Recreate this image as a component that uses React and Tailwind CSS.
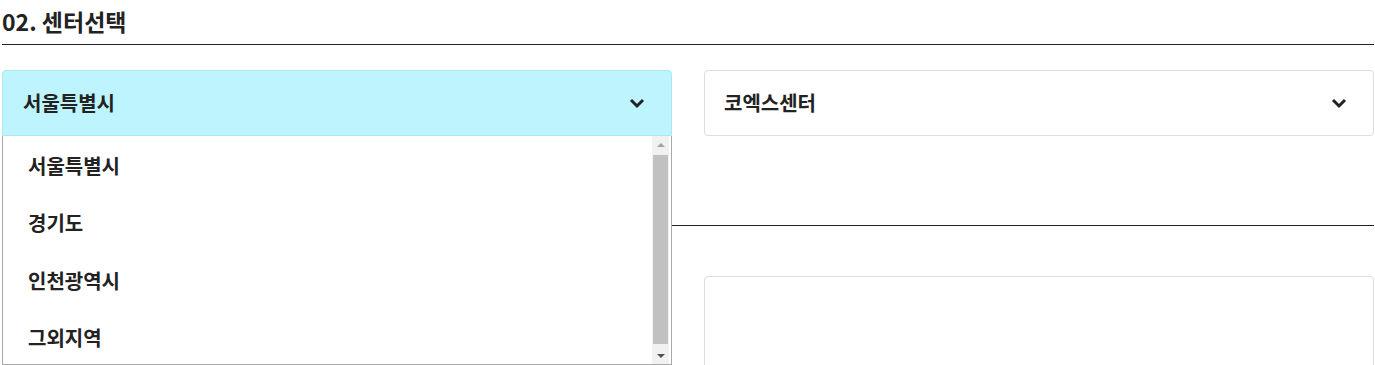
import React from 'react';

const regions = ['서울특별시', '경기도', '인천광역시', '그외지역'];

const Chevron = () => (
  <svg width="16" height="12" viewBox="0 0 16 12" fill="none">
    <path d="M2 3l6 6 6-6" stroke="#222" strokeWidth="3" />
  </svg>
);

const App = () => {
  return (
    <div className="w-[1375px] h-[365px] overflow-hidden bg-white pl-[2px] pr-[1px] text-[#222]" style={{ fontFamily: '"Noto Sans CJK KR", "Noto Sans", sans-serif' }}>
      {/* Section 02 */}
      <h2 className="h-[44px] pt-[5px] text-[23px] font-bold leading-[32px]">02. 센터선택</h2>
      <div className="h-[1px] bg-[#222]" />

      <div className="mt-[25px] grid grid-cols-2 gap-[32px]">
        {/* Region select (open) */}
        <div className="relative">
          <div className="flex h-[66px] items-center justify-between rounded-t-[4px] border border-[#a8e9f3] bg-[#bdf4fd] pl-[20px] pr-[26px]">
            <span className="text-[20px] font-bold">서울특별시</span>
            <Chevron />
          </div>
          <div className="absolute left-0 right-0 top-[66px] z-10 flex h-[229px] border border-t-0 border-[#a9a9a9] bg-white">
            <ul className="flex-1 pl-[25px] pt-[14px]">
              {regions.map((r) => (
                <li key={r} className="h-[57.33px] text-[20px] font-bold leading-[32px]">{r}</li>
              ))}
            </ul>
            <div className="mr-[2px] flex w-[17px] flex-col bg-[#f1f1f1]">
              <div className="flex h-[17px] items-center justify-center">
                <div className="h-0 w-0 border-x-[4px] border-b-[4px] border-x-transparent border-b-[#a3a3a3]" />
              </div>
              <div className="mx-[1px] mb-[3px] mt-[2px] flex-1 bg-[#c1c1c1]" />
              <div className="flex h-[17px] items-center justify-center">
                <div className="h-0 w-0 border-x-[4px] border-t-[4px] border-x-transparent border-t-[#505050]" />
              </div>
            </div>
          </div>
        </div>

        {/* Center select */}
        <div className="flex h-[66px] items-center justify-between rounded-[4px] border border-[#dddddd] bg-white pl-[19px] pr-[26px]">
          <span className="text-[20px] font-bold">코엑스센터</span>
          <Chevron />
        </div>
      </div>

      {/* Section 03 (heading hidden under dropdown) */}
      <div className="h-[89px]" />
      <div className="h-[1px] bg-[#222]" />
      <div className="mt-[50px] grid grid-cols-2 gap-[32px]">
        <div className="h-[120px] rounded-[4px] border border-[#dddddd]" />
        <div className="h-[120px] rounded-[4px] border border-[#dddddd]" />
      </div>
    </div>
  );
};

export default App;
